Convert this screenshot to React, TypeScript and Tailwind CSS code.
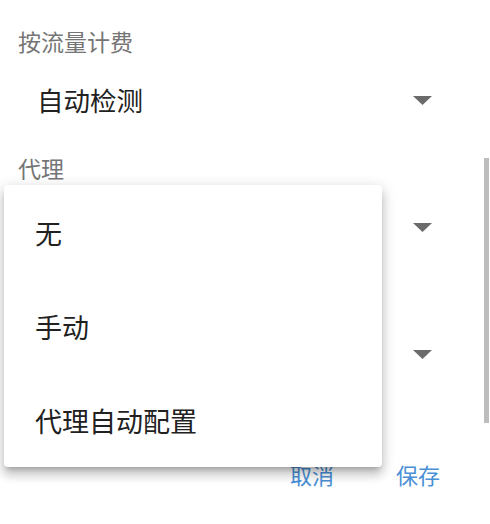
const fields = [
  { label: "按流量计费", value: "自动检测" },
  { label: "代理", value: "" },
  { label: "", value: "" },
];

const options = ["无", "手动", "代理自动配置"];

function Caret() {
  return (
    <svg width="19" height="9" viewBox="0 0 19 9" className="shrink-0">
      <path d="M0 0 H19 L9.5 9 Z" fill="#6b6b6b" />
    </svg>
  );
}

// value / label left empty where the open menu covers them
function Field({ label, value }: { label: string; value: string }) {
  return (
    <div className="mb-[23px]">
      <div className="h-[30px] pl-[18px] text-[23px] leading-[30px] text-[#757575]">
        {label}
      </div>
      <div className="mt-[14px] flex h-[60px] items-center justify-between pl-[37px] pr-[58px]">
        <span className="text-[26.5px] leading-none text-[#212121]">{value}</span>
        <Caret />
      </div>
    </div>
  );
}

export default function App() {
  return (
    <div className="relative h-[524px] w-[490px] overflow-hidden bg-white font-['Noto_Sans_CJK_SC','Noto_Sans',sans-serif]">
      <div className="pt-[26px]">
        {fields.map((f, i) => (
          <Field key={i} label={f.label} value={f.value} />
        ))}
      </div>

      {/* Actions */}
      <div className="mt-[66px] flex h-[48px] items-center justify-end gap-[38px] pr-[38px]">
        <button className="px-[12px] text-[22px] leading-none text-[#4a90d6]">取消</button>
        <button className="px-[12px] text-[22px] leading-none text-[#4a90d6]">保存</button>
      </div>

      {/* Scrollbar */}
      <div className="absolute left-[484px] top-[158px] h-[265px] w-[5px] bg-[#bdbdbd]" />

      {/* Dropdown menu */}
      <div className="absolute left-[4px] top-[185px] w-[378px] rounded-[4px] bg-white shadow-[0_8px_10px_1px_rgba(0,0,0,0.14),0_3px_14px_2px_rgba(0,0,0,0.12),0_5px_5px_-3px_rgba(0,0,0,0.2)]">
        {options.map((o) => (
          <div
            key={o}
            className="flex h-[94px] items-center pl-[31px] text-[27px] leading-none text-[#212121]"
          >
            {o}
          </div>
        ))}
      </div>
    </div>
  );
}
